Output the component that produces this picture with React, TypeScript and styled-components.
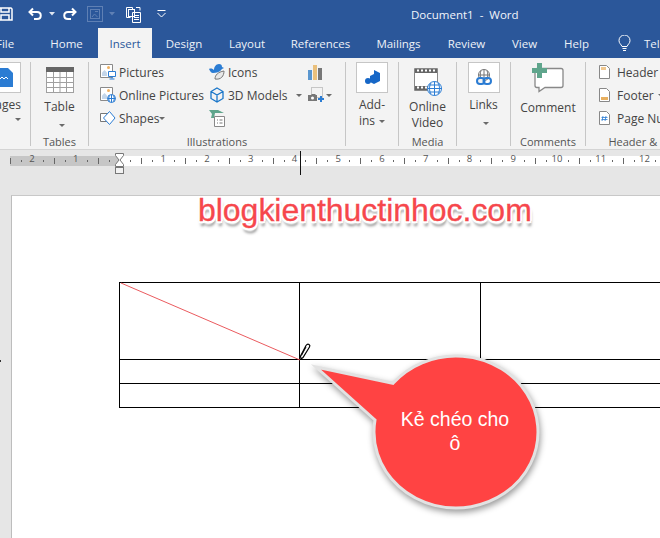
import React from 'react';
import styled, { createGlobalStyle } from 'styled-components';

const GlobalStyle = createGlobalStyle`
  html, body { margin: 0; padding: 0; height: 100%; overflow: hidden; background: #e6e6e6; }
  #root { height: 100%; }
`;

const BLUE = '#2b579a';
const UI_FONT = `"Open Sans", "Noto Sans", "Liberation Sans", sans-serif`;

const Window = styled.div`
  position: relative;
  width: 660px;
  height: 538px;
  overflow: hidden;
  display: flex;
  flex-direction: column;
  font-family: ${UI_FONT};
  font-size: 12px;
  color: #444;
`;

/* title bar */
const TitleBar = styled.div`
  height: 28px;
  flex: none;
  background: ${BLUE};
  display: flex;
  align-items: center;
  color: #fff;
`;

const QuickAccess = styled.div`
  width: 411px;
  flex: none;
  display: flex;
  align-items: center;
  height: 100%;
`;

const QuickIcon = styled.svg<{ $gap: number }>`
  display: block;
  flex: none;
  margin-left: ${p => p.$gap}px;
`;

const DocTitle = styled.div`
  font-size: 11.5px;
  white-space: pre;
  color: #f2f5fa;
  padding-top: 1px;
`;

/* tabs */
const TabBar = styled.div`
  height: 30px;
  flex: none;
  background: ${BLUE};
  display: flex;
  align-items: stretch;
  white-space: nowrap;
`;

const Tab = styled.div<{ $w: number; $active?: boolean; $start?: boolean }>`
  flex: none;
  box-sizing: border-box;
  width: ${p => p.$w}px;
  display: flex;
  justify-content: ${p => (p.$start ? 'flex-start' : 'center')};
  align-items: center;
  font-size: 11.5px;
  color: ${p => (p.$active ? BLUE : '#eef2f8')};
  background: ${p => (p.$active ? '#f3f3f3' : 'transparent')};
`;

const ClippedFile = styled.span`
  margin-left: -4px;
`;

const TabIcon = styled.svg`
  flex: none;
  align-self: center;
  margin: 0 13px 0 15px;
`;

/* ribbon */
const Ribbon = styled.div`
  height: 92px;
  flex: none;
  background: #f3f3f3;
  border-bottom: 1px solid #d4d4d4;
  box-sizing: border-box;
  display: flex;
  white-space: nowrap;
`;

const Group = styled.div<{ $w: number; $divider?: boolean }>`
  flex: none;
  width: ${p => p.$w}px;
  box-sizing: border-box;
  height: 84px;
  margin-top: 4px;
  display: flex;
  flex-direction: column;
  align-items: center;
  border-right: ${p => (p.$divider === false ? 'none' : '1px solid #c6c6c6')};
`;

const GroupBody = styled.div`
  flex: 1;
  width: 100%;
  display: flex;
  min-height: 0;
  overflow: hidden;
`;

const GroupLabel = styled.div`
  flex: none;
  height: 13px;
  font-size: 11px;
  line-height: 18px;
  color: #555;
  text-align: center;
`;

const BigButton = styled.div`
  flex: 1;
  display: flex;
  flex-direction: column;
  align-items: center;
  line-height: 16px;
  font-size: 12px;
  text-align: center;
`;

/* the Pages button is cut off by the window's left edge */
const CutOffButton = styled(BigButton)`
  flex: none;
  width: 50px;
  margin-left: -20px;
  padding-right: 9px;
  box-sizing: border-box;
  align-items: flex-end;
`;

const IconBox = styled.div`
  width: 30px;
  height: 29px;
  margin-bottom: 4px;
  display: flex;
  align-items: center;
  justify-content: center;
  background: #fff;
  border: 1px solid #c6c6c6;
  flex: none;
`;

const BigIcon = styled.div<{ $h: number; $top: number; $bottom: number }>`
  height: ${p => p.$h}px;
  margin-top: ${p => p.$top}px;
  margin-bottom: ${p => p.$bottom}px;
  display: flex;
  align-items: center;
  justify-content: center;
  flex: none;
`;

const Caret = styled.span<{ $ml?: number }>`
  display: inline-block;
  flex: none;
  width: 0;
  height: 0;
  border-left: 3px solid transparent;
  border-right: 3px solid transparent;
  border-top: 3px solid #6a6a6a;
  margin-left: ${p => p.$ml ?? 4}px;
  vertical-align: 2px;
`;

const CaretLine = styled.div<{ $top?: number }>`
  height: 14px;
  line-height: 12px;
  margin-top: ${p => p.$top ?? 0}px;
`;

const SmallColumn = styled.div<{ $w: number; $pad?: number }>`
  flex: none;
  width: ${p => p.$w}px;
  padding-left: ${p => p.$pad ?? 0}px;
  box-sizing: border-box;
  display: flex;
  flex-direction: column;
  gap: 3px;
`;

const SmallButton = styled.div<{ $gap?: number }>`
  height: 20px;
  display: flex;
  align-items: center;
  gap: ${p => p.$gap ?? 3}px;
  font-size: 12px;
`;

const SmallIcon = styled.svg`
  flex: none;
  display: block;
`;

/* ruler */
const RulerBar = styled.div`
  height: 26px;
  flex: none;
  background: #e6e6e6;
`;

const RulerSvg = styled.svg`
  display: block;
  font-family: ${UI_FONT};
`;

/* document */
const DocArea = styled.div`
  flex: 1;
  min-height: 0;
  background: #e6e6e6;
  padding: 19px 0 0 11px;
`;

const Page = styled.div`
  height: 100%;
  background: #fff;
  border-top: 1px solid #c8c8c8;
  border-left: 1px solid #bdbdbd;
  box-sizing: border-box;
  padding: 86px 0 0 107px;
`;

const Table = styled.table`
  border-collapse: collapse;
  table-layout: fixed;
  width: 600px;
`;

const Cell = styled.td<{ $w?: number; $h: number }>`
  border: 1px solid #000;
  padding: 0;
  height: ${p => p.$h}px;
  width: ${p => (p.$w ? `${p.$w}px` : 'auto')};
  box-sizing: border-box;
  position: relative;
`;

const Diagonal = styled.svg`
  position: absolute;
  left: 0;
  top: 0;
  display: block;
  overflow: visible;
`;

const PenCursor = styled.svg`
  position: absolute;
  left: 295px;
  top: 342px;
  overflow: visible;
`;

const MarginMark = styled.div`
  position: absolute;
  left: 0;
  top: 360px;
  width: 1px;
  height: 2px;
  background: #333;
`;

const Watermark = styled.div`
  position: absolute;
  left: 198px;
  top: 190px;
  font-family: "Liberation Sans", Arial, sans-serif;
  font-size: 32px;
  line-height: 40px;
  letter-spacing: -0.03px;
  color: #f6474c;
  -webkit-text-stroke: 0.3px #f6474c;
  white-space: nowrap;
  text-shadow:
    -2px 0 0 #fff, 2px 0 0 #fff, 0 -2px 0 #fff, 0 2px 0 #fff,
    -1.5px -1.5px 0 #fff, 1.5px -1.5px 0 #fff, -1.5px 1.5px 0 #fff, 1.5px 1.5px 0 #fff,
    0 3px 2px #fff,
    1px 5px 3px rgba(0, 0, 0, 0.5);
`;

const Callout = styled.div`
  position: absolute;
  left: 305px;
  top: 345px;
  width: 250px;
  height: 180px;
`;

const CalloutShape = styled.svg`
  position: absolute;
  left: 0;
  top: 0;
  overflow: visible;
  filter: drop-shadow(1px 3px 3px rgba(0, 0, 0, 0.4));
`;

const CalloutText = styled.div`
  position: absolute;
  left: 75px;
  top: 62px;
  width: 150px;
  text-align: center;
  color: #fff;
  font-family: "Liberation Sans", Arial, sans-serif;
  font-size: 19.5px;
  line-height: 24px;
`;

const tabs: [string, number, boolean?][] = [
  ['Home', 63],
  ['Insert', 54, true],
  ['Design', 64],
  ['Layout', 62],
  ['References', 85],
  ['Mailings', 71],
  ['Review', 65],
  ['View', 51],
  ['Help', 53],
];

const Ruler = () => {
  const unit = 43.75;
  const zero = 119.5;
  const marks: React.ReactNode[] = [];
  for (let i = -3; i < 13; i++) {
    const x = zero + i * unit;
    const num = i < 0 ? -i : i;
    if (i !== 0) {
      marks.push(
        <text key={`n${i}`} x={x} y={12} fontSize="9.5" fill="#555" textAnchor="middle">{num}</text>
      );
    }
    marks.push(<rect key={`h${i}`} x={Math.round(x + unit / 2)} y={8} width={1} height={6} fill="#666" />);
    marks.push(<rect key={`a${i}`} x={Math.round(x + unit / 4)} y={10} width={1} height={2} fill="#666" />);
    marks.push(<rect key={`b${i}`} x={Math.round(x + (3 * unit) / 4)} y={10} width={1} height={2} fill="#666" />);
  }
  return (
    <RulerSvg width="660" height="26" viewBox="0 0 660 26">
      <rect x="10" y="6" width="650" height="10" fill="#fff" />
      <rect x="10" y="6" width="109" height="10" fill="#c6c6c6" />
      {marks}
      <path d="M115.5 3.500h8v2l-3.500 4.500 3.500 4.500v2h-8v-2l3.500-4.500-3.500-4.500z" fill="#fff" stroke="#777" />
      <rect x="115.500" y="17.500" width="8" height="6" fill="#f2f2f2" stroke="#777" />
      <rect x="300" y="1" width="1" height="24" fill="#111" />
    </RulerSvg>
  );
};

const App: React.FC = () => (
  <>
    <GlobalStyle />
    <Window>
      <TitleBar>
        <QuickAccess>
          <QuickIcon $gap={0} width="13" height="14" viewBox="0 0 13 14" fill="none" stroke="#fff" strokeWidth="1.500">
            <path d="M-3 1h14l1 1v11H-3z" />
            <path d="M1 1v4h8V1M1 13V8h8v5" />
          </QuickIcon>
          <QuickIcon $gap={15} width="15" height="14" viewBox="0 0 15 14" fill="none" stroke="#fff" strokeWidth="2">
            <path d="M5 1.500 1.500 5 5 8.500M2 5h7c5 0 5 7 0 7H6" />
          </QuickIcon>
          <QuickIcon $gap={6} width="6" height="4" viewBox="0 0 6 4" fill="#dfe6f1"><path d="M0 0h6L3 3.500z" /></QuickIcon>
          <QuickIcon $gap={7} width="15" height="14" viewBox="0 0 15 14" fill="none" stroke="#fff" strokeWidth="2">
            <path d="M10 1.500 13.500 5 10 8.500M13 5H6c-5 0-5 7 0 7h3" />
          </QuickIcon>
          <QuickIcon $gap={10} width="16" height="16" viewBox="0 0 16 16" fill="none" stroke="#5f80b4">
            <rect x=".500" y=".500" width="15" height="15" />
            <rect x="3.500" y="3.500" width="9" height="9" />
            <path d="M5 11l2.500-3 3 3M8 5.500h3" />
          </QuickIcon>
          <QuickIcon $gap={6} width="6" height="4" viewBox="0 0 6 4" fill="#5f80b4"><path d="M0 0h6L3 3.500z" /></QuickIcon>
          <QuickIcon $gap={10} width="17" height="17" viewBox="0 0 17 17" fill="none" stroke="#fff">
            <path d="M5.500 11.500h-4v-10h6v2" />
            <rect x="3.500" y="3.500" width="6" height="7" />
            <path d="M7.500 6.500h8v10h-8zM9 9.500h5M9 11.500h5M9 13.500h5M11 1.500h4v3" />
          </QuickIcon>
          <QuickIcon $gap={15} width="9" height="8" viewBox="0 0 9 8" fill="none" stroke="#fff">
            <path d="M.5 .5h8" />
            <path d="M.5 3l4 4 4-4" />
          </QuickIcon>
        </QuickAccess>
        <DocTitle>{'Document1  -  Word'}</DocTitle>
      </TitleBar>

      <TabBar>
        <Tab $w={35} $start><ClippedFile>File</ClippedFile></Tab>
        {tabs.map(([label, w, active]) => (
          <Tab key={label} $w={w} $active={active}>{label}</Tab>
        ))}
        <TabIcon width="13" height="17" viewBox="0 0 13 17" fill="none" stroke="#fff">
          <path d="M4 11.500C3 9 1 8.500 1 5.500a5.500 5.500 0 0 1 11 0c0 3-2 3.500-3 6z" />
          <path d="M4.500 13.500h4M5 15.500h3" />
        </TabIcon>
        <Tab $w={30} $start>Tell</Tab>
      </TabBar>

      <Ribbon>
        <Group $w={31}>
          <GroupBody>
            <CutOffButton>
              <IconBox>
                <svg width="16" height="19" viewBox="0 0 16 19">
                  <path d="M0 0h11l5 5v14H0z" fill="#2b7cd3" />
                  <path d="M3 11l2-2 2 2 2-2 2 2" stroke="#fff" fill="none" />
                </svg>
              </IconBox>
              <div>ages</div>
              <CaretLine><Caret /></CaretLine>
            </CutOffButton>
          </GroupBody>
        </Group>

        <Group $w={58}>
          <GroupBody>
            <BigButton>
              <BigIcon $h={26} $top={5} $bottom={6}>
                <svg width="28" height="26" viewBox="0 0 28 26" fill="#fff" stroke="#a0a0a0">
                  <rect x=".5" y=".5" width="27" height="25" />
                  <rect x="0" y="0" width="28" height="5" fill="#666" stroke="none" />
                  <path d="M.5 10.500h27M.5 15.500h27M.5 20.500h27M7.500 5v20M14 5v20M20.500 5v20" fill="none" />
                </svg>
              </BigIcon>
              <div>Table</div>
              <CaretLine $top={4}><Caret /></CaretLine>
            </BigButton>
          </GroupBody>
          <GroupLabel>Tables</GroupLabel>
        </Group>

        <Group $w={257}>
          <GroupBody>
            <SmallColumn $w={120} $pad={11}>
              <SmallButton>
                <SmallIcon width="16" height="16" viewBox="0 0 16 16" fill="none">
                  <path d="M.5 .5h12v13H.5z" stroke="#8a8a8a" fill="#fff" />
                  <path d="M2 12V8.500l2.500-2.500L7 8.500V12z" fill="#c4d6ea" />
                  <circle cx="8.500" cy="3.500" r="1.500" fill="#f0b060" />
                  <path d="M8.500 7.500h7v5h-7zM12 12.500v2M9.500 15h5" stroke="#2b7cd3" fill="#fff" />
                </SmallIcon>
                Pictures
              </SmallButton>
              <SmallButton>
                <SmallIcon width="16" height="16" viewBox="0 0 16 16" fill="none">
                  <path d="M.5 .5h12v13H.5z" stroke="#8a8a8a" fill="#fff" />
                  <path d="M2 12V8.500l2.500-2.500L7 8.500V12z" fill="#c4d6ea" />
                  <circle cx="8.500" cy="3.500" r="1.500" fill="#f0b060" />
                  <circle cx="11.500" cy="11.500" r="4" stroke="#2b7cd3" fill="#fff" />
                  <path d="M7.500 11.500h8M11.500 7.500v8M9.500 8.500c-1 2-1 4 0 6M13.500 8.500c1 2 1 4 0 6" stroke="#2b7cd3" />
                </SmallIcon>
                Online Pictures
              </SmallButton>
              <SmallButton>
                <SmallIcon width="16" height="16" viewBox="0 0 16 16" fill="none">
                  <path d="M.5 3.500h9v8h-9z" stroke="#777" fill="#fff" />
                  <path d="M9.500 1.500 15 8l-5.500 6.500L3.500 8z" stroke="#2b7cd3" fill="#fff" />
                </SmallIcon>
                Shapes
                <Caret $ml={-3} />
              </SmallButton>
            </SmallColumn>
            <SmallColumn $w={96}>
              <SmallButton>
                <SmallIcon width="16" height="16" viewBox="0 0 16 16">
                  <path d="M0 5c2-1 4 0 5 1 0-3 2-6 5-6 2 0 3 1 3 3l2 1-2 1c-2 3-6 4-9 4-2 0-3-2-4-4z" fill="#2b7cd3" />
                  <path d="M6 15c0-4 3-7 9-8 0 5-3 9-9 8z" fill="#e8e8e8" stroke="#777" />
                </SmallIcon>
                Icons
              </SmallButton>
              <SmallButton>
                <SmallIcon width="16" height="16" viewBox="0 0 16 16" fill="none" stroke="#1a76c9" strokeWidth="1.300">
                  <path d="M8 1l6 3.500v7L8 15l-6-3.500v-7zM2 4.500 8 8l6-3.500M8 8v7" />
                </SmallIcon>
                3D Models
                <Caret $ml={5} />
              </SmallButton>
              <SmallButton>
                <SmallIcon width="17" height="17" viewBox="0 0 17 17" fill="none">
                  <path d="M0 0h9l6 3H6L5 8H2L3 4z" fill="#5fa58c" />
                  <path d="M5.500 6.500h10v10h-10z" stroke="#888" fill="#fff" />
                  <path d="M8 10h1M8 13h1M10.500 10h3M10.500 13h3" stroke="#777" />
                </SmallIcon>
              </SmallButton>
            </SmallColumn>
            <SmallColumn $w={40} $pad={3}>
              <SmallButton>
                <SmallIcon width="15" height="16" viewBox="0 0 15 16">
                  <rect x="0" y="6" width="4" height="10" fill="#5a96cf" />
                  <rect x="5" y="1" width="4" height="15" fill="#eac07c" />
                  <rect x="10" y="4" width="4" height="12" fill="#777" />
                </SmallIcon>
              </SmallButton>
              <SmallButton>
                <SmallIcon width="17" height="16" viewBox="0 0 17 16" fill="none">
                  <rect x="3.500" y=".5" width="11" height="10" stroke="#999" strokeDasharray="1 1" />
                  <path d="M0 8h3l1-1h3l1 1h1v6H0z" fill="#777" />
                  <circle cx="4.500" cy="11" r="1.500" fill="#fff" />
                  <path d="M10 12h6M13 9v6" stroke="#2b7cd3" strokeWidth="2" />
                </SmallIcon>
                <Caret $ml={-2} />
              </SmallButton>
            </SmallColumn>
          </GroupBody>
          <GroupLabel>Illustrations</GroupLabel>
        </Group>

        <Group $w={53}>
          <GroupBody>
            <BigButton>
              <IconBox>
                <svg width="15" height="15" viewBox="0 0 15 15" fill="#1667c7">
                  <path d="M9 0l6 3v8l-6 3-4-2V6l4-2z" />
                  <circle cx="3" cy="11" r="3" />
                </svg>
              </IconBox>
              <div>Add-</div>
              <div>ins<Caret /></div>
            </BigButton>
          </GroupBody>
        </Group>

        <Group $w={58}>
          <GroupBody>
            <BigButton>
              <BigIcon $h={28} $top={6} $bottom={3}>
                <svg width="28" height="28" viewBox="0 0 28 28" fill="none">
                  <path d="M.5 .5h23v22H.5z" stroke="#888" fill="#fff" />
                  <path d="M1 1h22v4H1zM1 18h22v4H1z" fill="#666" />
                  <path d="M3 2.500h2M7 2.500h2M11 2.500h2M15 2.500h2M19 2.500h2M3 19.500h2M7 19.500h2M11 19.500h2" stroke="#fff" strokeWidth="2" />
                  <circle cx="20.500" cy="20.500" r="7" stroke="#2b7cd3" fill="#fff" />
                  <path d="M14 20.500h14M20.500 13.500v14M17 15c-2 3.500-2 7.500 0 11M24 15c2 3.500 2 7.500 0 11M15 17h11M15 24h11" stroke="#2b7cd3" />
                </svg>
              </BigIcon>
              <div>Online</div>
              <div>Video</div>
            </BigButton>
          </GroupBody>
          <GroupLabel>Media</GroupLabel>
        </Group>

        <Group $w={54}>
          <GroupBody>
            <BigButton>
              <IconBox>
                <svg width="16" height="17" viewBox="0 0 16 17" fill="none">
                  <circle cx="8" cy="6" r="5.500" stroke="#777" />
                  <path d="M2.500 6h11M8 .5v11M5 1.500c-1 3-1 6 0 9M11 1.500c1 3 1 6 0 9" stroke="#777" />
                  <rect x="1" y="9" width="7.500" height="6" rx="3" stroke="#2b7cd3" strokeWidth="2" fill="#f3f3f3" />
                  <rect x="7.500" y="9" width="7.500" height="6" rx="3" stroke="#2b7cd3" strokeWidth="2" />
                </svg>
              </IconBox>
              <div>Links</div>
              <CaretLine $top={4}><Caret /></CaretLine>
            </BigButton>
          </GroupBody>
        </Group>

        <Group $w={75}>
          <GroupBody>
            <BigButton>
              <BigIcon $h={30} $top={1} $bottom={7}>
                <svg width="32" height="30" viewBox="0 0 32 30" fill="none">
                  <path d="M5 5.500h24q2 0 2 2v15q0 2-2 2H13l-6 4v-4H5q-2 0-2-2V7z" stroke="#888" fill="#fff" strokeWidth="1.300" />
                  <path d="M5 0h5v5h5v5h-5v5H5v-5H0V5h5z" fill="#5fa58c" />
                </svg>
              </BigIcon>
              <div>Comment</div>
            </BigButton>
          </GroupBody>
          <GroupLabel>Comments</GroupLabel>
        </Group>

        <Group $w={130} $divider={false}>
          <GroupBody>
            <SmallColumn $w={130} $pad={13}>
              <SmallButton $gap={7}>
                <SmallIcon width="11" height="14" viewBox="0 0 11 14" fill="#fff">
                  <path d="M.5 .5h7l3 3v10H.5z" stroke="#888" />
                  <rect x="2" y="2" width="5" height="3" fill="#f0c890" />
                </SmallIcon>
                Header<Caret $ml={-3} />
              </SmallButton>
              <SmallButton $gap={7}>
                <SmallIcon width="11" height="14" viewBox="0 0 11 14" fill="#fff">
                  <path d="M.5 .5h7l3 3v10H.5z" stroke="#888" />
                  <rect x="2" y="9" width="7" height="3" fill="#e8b060" />
                </SmallIcon>
                Footer<Caret $ml={-3} />
              </SmallButton>
              <SmallButton $gap={7}>
                <SmallIcon width="11" height="14" viewBox="0 0 11 14" fill="#fff">
                  <path d="M.5 .5h7l3 3v10H.5z" stroke="#888" />
                  <path d="M4 5l-1 5M7 5l-1 5M2.500 6.500h6M2.500 8.500h6" stroke="#2b7cd3" strokeWidth=".8" />
                </SmallIcon>
                Page Number
              </SmallButton>
            </SmallColumn>
          </GroupBody>
          <GroupLabel>{'Header & Footer'}</GroupLabel>
        </Group>
      </Ribbon>

      <RulerBar><Ruler /></RulerBar>

      <DocArea>
        <Page>
          <Table>
            <tbody>
              <tr>
                <Cell $w={180} $h={77}>
                  <Diagonal width="180" height="77" viewBox="0 0 180 77">
                    <path d="M1 0 180 77" stroke="#e8474c" strokeWidth=".9" fill="none" />
                  </Diagonal>
                </Cell>
                <Cell $w={181} $h={77} />
                <Cell $h={77} />
              </tr>
              <tr>
                <Cell $w={180} $h={24} />
                <Cell $w={181} $h={24} />
                <Cell $h={24} />
              </tr>
              <tr>
                <Cell $w={180} $h={24} />
                <Cell $w={181} $h={24} />
                <Cell $h={24} />
              </tr>
            </tbody>
          </Table>
        </Page>
      </DocArea>

      <MarginMark />

      <PenCursor width="16" height="20" viewBox="0 0 16 20" fill="none">
        <path d="M6 17 5.500 14 11 3.500q1.500-2 3-1t.5 2.500L8 15.500z" stroke="#000" strokeWidth="1.200" fill="#fff" />
        <path d="M6.500 13.500 11 5" stroke="#000" />
      </PenCursor>

      <Watermark>blogkienthuctinhoc.com</Watermark>

      <Callout>
        <CalloutShape width="250" height="180" viewBox="0 0 250 180">
          <path d="M11 22 88 38.300A82 76 0 1 1 70 75Z" fill="#ff4343" stroke="#e2e2e2" strokeWidth="3" />
        </CalloutShape>
        <CalloutText>Kẻ chéo cho<br />ô</CalloutText>
      </Callout>
    </Window>
  </>
);

export default App;
